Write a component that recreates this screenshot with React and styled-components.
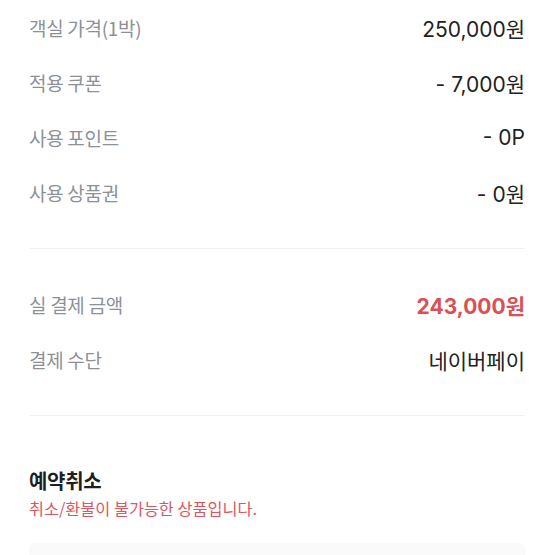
import React from 'react'
import styled, { createGlobalStyle } from 'styled-components'

const GlobalStyle = createGlobalStyle`
  html, body {
    margin: 0;
    padding: 0;
    background: #ffffff;
  }
  body {
    font-family: "Noto Sans CJK KR", "Noto Sans", sans-serif;
  }
`

const rowsTop = [
  { label: '객실 가격(1박)', value: '250,000원' },
  { label: '적용 쿠폰', value: '- 7,000원' },
  { label: '사용 포인트', value: '- 0P' },
  { label: '사용 상품권', value: '- 0원' },
]

function App() {
  return (
    <>
      <GlobalStyle />
      <Page>
        <Section>
          {rowsTop.map((r) => (
            <Row key={r.label}>
              <Label>{r.label}</Label>
              <Value>{r.value}</Value>
            </Row>
          ))}
        </Section>
        <Divider />
        <Section>
          <Row>
            <Label>실 결제 금액</Label>
            <Value highlight>243,000원</Value>
          </Row>
          <Row>
            <Label>결제 수단</Label>
            <Value>네이버페이</Value>
          </Row>
        </Section>
        <Divider />
        <CancelBlock>
          <Title>예약취소</Title>
          <Notice>취소/환불이 불가능한 상품입니다.</Notice>
        </CancelBlock>
        <GrayBox />
      </Page>
    </>
  )
}

export default App

const Page = styled.div`
  width: 555px;
  height: 555px;
  overflow: hidden;
  padding: 0 30px 0 29px;
  box-sizing: border-box;
`

const Section = styled.div`
  display: flex;
  flex-direction: column;
`

const Row = styled.div`
  display: flex;
  justify-content: space-between;
  align-items: center;
  height: 55px;
`

const Label = styled.span`
  font-size: 19px;
  color: #8d9197;
  letter-spacing: -0.3px;
`

const Value = styled.span`
  font-family: Inter, "Noto Sans CJK KR", sans-serif;
  font-size: 21px;
  color: ${(p) => (p.highlight ? '#dc4f55' : '#222222')};
  font-weight: ${(p) => (p.highlight ? 700 : 400)};
`

const Divider = styled.div`
  height: 1px;
  background: #f1f2f3;
  margin: 28px 0;
`

const CancelBlock = styled.div`
  display: flex;
  flex-direction: column;
  padding-top: 22px;
`

const Title = styled.h2`
  margin: 0;
  font-size: 20px;
  font-weight: 700;
  color: #1f1f1f;
  letter-spacing: -0.3px;
`

const Notice = styled.p`
  margin: 1px 0 0;
  font-size: 16.3px;
  color: #dd5560;
`

const GrayBox = styled.div`
  margin-top: 23px;
  height: 80px;
  background: #fafafa;
  border-radius: 6px;
`
